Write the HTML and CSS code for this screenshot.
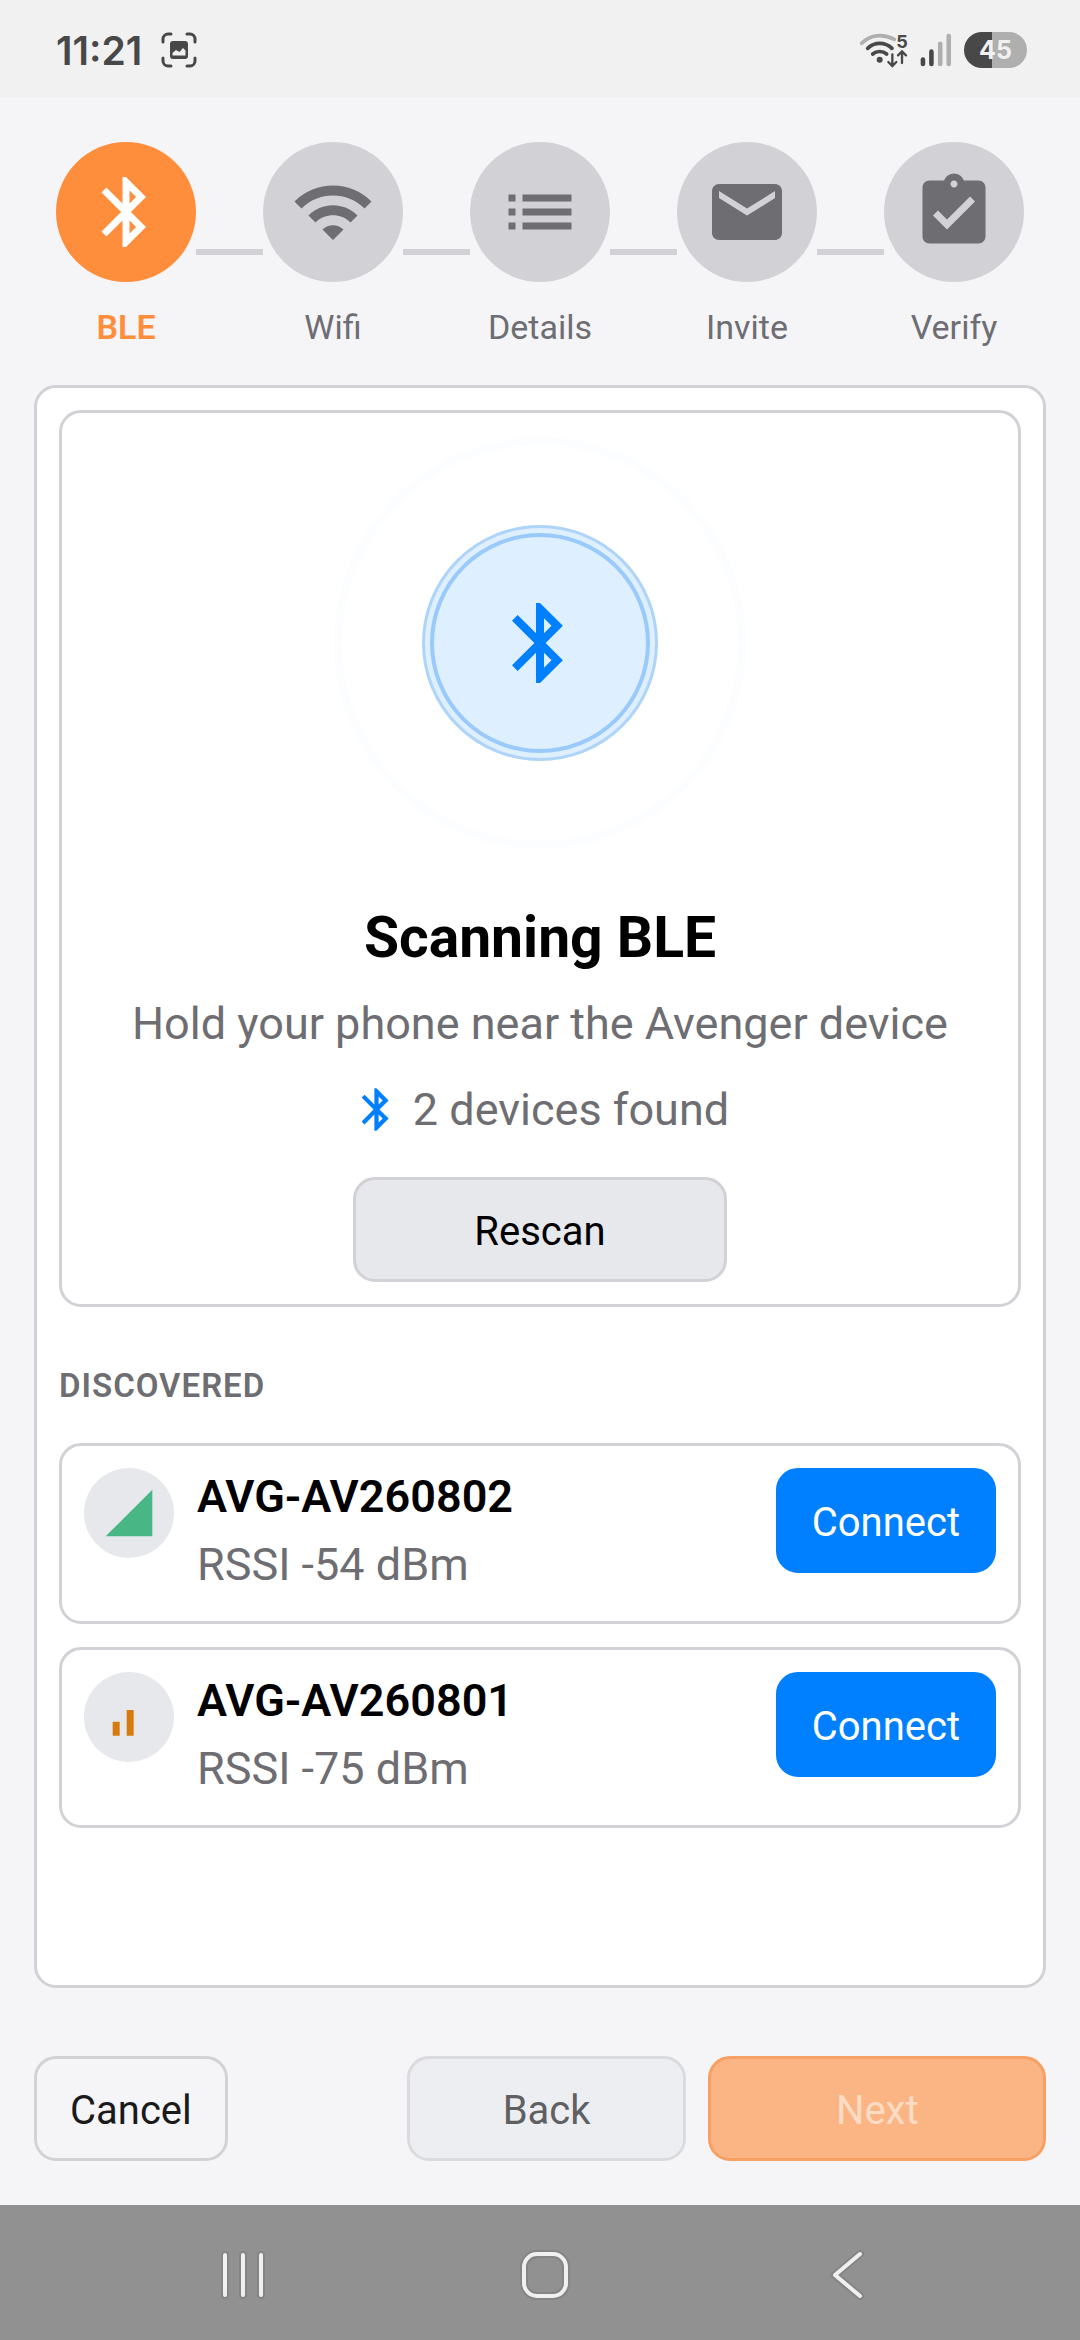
FILE: index.html
```html
<!DOCTYPE html>
<html lang="en">

<head>
    <meta charset="UTF-8">
    <meta name="viewport" content="width=device-width, initial-scale=1.0">
    <title>Device Setup</title>
    <link rel="stylesheet" href="styles.css">
</head>

<body>
    <!-- shared icon shapes -->
    <svg class="sprite" aria-hidden="true">
        <symbol id="bluetooth" viewBox="0 0 24 24">
            <path d="M17.71 7.71L12 2h-1v7.59L6.41 5 5 6.41 10.59 12 5 17.59 6.41 19 11 14.41V22h1l5.71-5.71-4.3-4.29 4.3-4.29zM13 5.83l1.88 1.88L13 9.59V5.83zm1.88 10.46L13 18.17v-3.76l1.88 1.88z" />
        </symbol>
    </svg>

    <div class="status-bar">
        <div class="status-left">
            <span class="clock">11:21</span>
            <svg class="capture-icon" viewBox="0 0 36 36">
                <path d="M2 10V7a5 5 0 0 1 5-5h3M26 2h3a5 5 0 0 1 5 5v3M34 26v3a5 5 0 0 1-5 5h-3M10 34H7a5 5 0 0 1-5-5v-3" fill="none" stroke="#484848" stroke-width="3" stroke-linecap="round" />
                <path fill-rule="evenodd" fill="#484848" d="M12 9h12a3 3 0 0 1 3 3v12a3 3 0 0 1-3 3H12a3 3 0 0 1-3-3V12a3 3 0 0 1 3-3zM11.500 21v2.500h13v-5l-2.500-2.500-3.500 4-3.500-2z" />
            </svg>
        </div>
        <div class="status-right">
            <svg class="wifi-status" viewBox="54 64 147 108">
                <path d="M62 98C86 73 124 67 160 86" fill="none" stroke="#afafaf" stroke-width="11" stroke-linecap="round" />
                <path d="M80 113C100 93 132 93 153 113M95 130C107 120 125 120 137 130" fill="none" stroke="#484848" stroke-width="11" stroke-linecap="round" />
                <circle cx="116" cy="147" r="9" fill="#484848" />
                <path d="M154 131v34M142 154l12 12 12-12M183 157v-34M171 134l12-12 12 12" fill="none" stroke="#484848" stroke-width="7" stroke-linecap="round" />
                <text x="166" y="111" class="wifi-band">5</text>
            </svg>
            <svg class="signal-status" viewBox="232 66 98 106">
                <g fill="#484848">
                    <rect x="234" y="141" width="14" height="28" rx="7" />
                    <rect x="260" y="117" width="14" height="52" rx="7" />
                </g>
                <g fill="#afafaf">
                    <rect x="287" y="93" width="14" height="76" rx="7" />
                    <rect x="313" y="69" width="14" height="100" rx="7" />
                </g>
            </svg>
            <span class="battery">45</span>
        </div>
    </div>

    <ol class="steps">
        <li class="step active">
            <div class="step-circle">
                <svg viewBox="0 0 24 24"><use href="#bluetooth" /></svg>
            </div>
            <span>BLE</span>
        </li>
        <li class="line"></li>
        <li class="step">
            <div class="step-circle">
                <svg viewBox="0 0 24 24">
                    <path d="M1 9l2 2c4.97-4.97 13.03-4.97 18 0l2-2C16.93 2.93 7.08 2.93 1 9zm8 8l3 3 3-3c-1.65-1.66-4.34-1.66-6 0zm-4-4l2 2c2.76-2.76 7.24-2.76 10 0l2-2C15.14 9.14 8.87 9.14 5 13z" />
                </svg>
            </div>
            <span>Wifi</span>
        </li>
        <li class="line"></li>
        <li class="step">
            <div class="step-circle">
                <svg viewBox="0 0 24 24">
                    <path d="M3 13h2v-2H3v2zm0 4h2v-2H3v2zm0-8h2V7H3v2zm4 4h14v-2H7v2zm0 4h14v-2H7v2zM7 7v2h14V7H7z" />
                </svg>
            </div>
            <span>Details</span>
        </li>
        <li class="line"></li>
        <li class="step">
            <div class="step-circle">
                <svg viewBox="0 0 24 24">
                    <path d="M20 4H4c-1.1 0-1.99.9-1.99 2L2 18c0 1.1.9 2 2 2h16c1.1 0 2-.9 2-2V6c0-1.1-.9-2-2-2zm0 4l-8 5-8-5V6l8 5 8-5v2z" />
                </svg>
            </div>
            <span>Invite</span>
        </li>
        <li class="line"></li>
        <li class="step">
            <div class="step-circle">
                <svg viewBox="0 0 24 24">
                    <path d="M19 3h-4.18C14.4 1.84 13.3 1 12 1c-1.3 0-2.4.84-2.82 2H5c-1.1 0-2 .9-2 2v14c0 1.1.9 2 2 2h14c1.1 0 2-.9 2-2V5c0-1.1-.9-2-2-2zm-7 0c.55 0 1 .45 1 1s-.45 1-1 1-1-.45-1-1 .45-1 1-1zm-2 14l-4-4 1.41-1.41L10 14.17l6.59-6.59L18 9l-8 8z" />
                </svg>
            </div>
            <span>Verify</span>
        </li>
    </ol>

    <main class="panel">
        <section class="scan-card">
            <div class="radar">
                <div class="ring ring-far"></div>
                <div class="ring ring-outer"></div>
                <div class="ring ring-inner">
                    <svg viewBox="0 0 24 24"><use href="#bluetooth" /></svg>
                </div>
            </div>
            <h1>Scanning BLE</h1>
            <p class="hint">Hold your phone near the Avenger device</p>
            <p class="found">
                <svg viewBox="0 0 24 24"><use href="#bluetooth" /></svg>
                <span>2 devices found</span>
            </p>
            <button type="button" class="btn rescan">Rescan</button>
        </section>

        <h2>DISCOVERED</h2>
        <ul class="devices">
            <li class="device">
                <div class="signal strong">
                    <svg viewBox="0 0 24 24"><path d="M2 22h20V2z" /></svg>
                </div>
                <div class="device-info">
                    <strong>AVG-AV260802</strong>
                    <span>RSSI -54 dBm</span>
                </div>
                <button type="button" class="btn connect">Connect</button>
            </li>
            <li class="device">
                <div class="signal weak">
                    <svg viewBox="0 0 24 24"><path d="M5 14h3v6H5zM11 9h3v11h-3z" /></svg>
                </div>
                <div class="device-info">
                    <strong>AVG-AV260801</strong>
                    <span>RSSI -75 dBm</span>
                </div>
                <button type="button" class="btn connect">Connect</button>
            </li>
        </ul>
    </main>

    <footer class="actions">
        <button type="button" class="btn cancel">Cancel</button>
        <button type="button" class="btn back" disabled>Back</button>
        <button type="button" class="btn next" disabled>Next</button>
    </footer>

    <nav class="nav-bar">
        <button type="button" aria-label="Recents">
            <svg viewBox="0 0 60 60">
                <path class="halo" d="M12 10v40M30 10v40M48 10v40" />
                <path d="M12 10v40M30 10v40M48 10v40" />
            </svg>
        </button>
        <button type="button" aria-label="Home">
            <svg viewBox="0 0 60 60">
                <rect class="halo" x="9" y="9" width="42" height="42" rx="13" />
                <rect x="9" y="9" width="42" height="42" rx="13" />
            </svg>
        </button>
        <button type="button" aria-label="Back">
            <svg viewBox="0 0 60 60">
                <path class="halo" d="M42 9L17 30l25 21" />
                <path d="M42 9L17 30l25 21" />
            </svg>
        </button>
    </nav>
</body>

</html>
```

FILE: styles.css
```css
* {
    box-sizing: border-box;
    margin: 0;
    padding: 0;
}

body {
    min-height: 100vh;
    display: flex;
    flex-direction: column;
    background-color: #f5f5f8;
    color: #000;
    font-family: Roboto, sans-serif;
}

ol,
ul {
    list-style: none;
}

.sprite {
    display: none;
}

/* status bar */
.status-bar {
    height: 98px;
    padding: 2px 53px 0 56px;
    display: flex;
    align-items: center;
    justify-content: space-between;
    background-color: #f1f1f1;
    color: #484848;
    font-family: Inter, sans-serif;
}

.status-left,
.status-right {
    display: flex;
    align-items: center;
}

.status-left {
    gap: 19px;
}

.status-right {
    gap: 12px;
}

.clock {
    font-size: 39px;
    font-weight: 600;
}

.capture-icon {
    width: 36px;
    height: 36px;
}

.wifi-status {
    width: 49px;
    height: 36px;
    overflow: visible;
}

.wifi-band {
    font-size: 54px;
    font-weight: 700;
    fill: #484848;
}

.signal-status {
    width: 32px;
    height: 36px;
}

.battery {
    width: 63px;
    height: 36px;
    border-radius: 18px;
    background: linear-gradient(to right, #484848 45%, #afafaf 45%);
    color: #f1f1f1;
    font-size: 25px;
    font-weight: 700;
    line-height: 36px;
    text-align: center;
}

/* stepper */
.steps {
    display: flex;
    padding: 44px 56px 38px;
}

.step {
    width: 140px;
    display: flex;
    flex-direction: column;
    align-items: center;
    gap: 25px;
    color: #6d6d72;
    font-size: 34px;
    line-height: 40px;
}

.step-circle {
    width: 140px;
    height: 140px;
    border-radius: 50%;
    background-color: #d2d1d6;
    display: flex;
    align-items: center;
    justify-content: center;
}

.step-circle svg {
    width: 84px;
    height: 84px;
    fill: #6d6d72;
}

.step.active {
    color: #ff8e3c;
    font-weight: 600;
}

.active .step-circle {
    background-color: #ff8e3c;
}

.active .step-circle svg {
    fill: #fff;
}

.line {
    flex: 1;
    height: 6px;
    margin-top: 107px;
    background-color: #d2d1d6;
}

/* main panel */
.panel {
    flex: 1;
    margin: 0 34px;
    padding: 22px;
    background-color: #fff;
    border: 3px solid #d2d1d6;
    border-radius: 22px;
}

.scan-card {
    padding: 22px;
    display: flex;
    flex-direction: column;
    align-items: center;
    border: 3px solid #d2d1d6;
    border-radius: 22px;
    text-align: center;
}

.radar {
    display: grid;
    place-items: center;
    height: 416px;
    margin-bottom: 54px;
}

.ring {
    grid-area: 1 / 1;
    border-radius: 50%;
}

.ring-far {
    width: 412px;
    height: 412px;
    border: 8px solid #fcfdff;
}

.ring-outer {
    width: 236px;
    height: 236px;
    background-color: #deefff;
    border: 3px solid #aed4f9;
}

.ring-inner {
    width: 220px;
    height: 220px;
    display: flex;
    align-items: center;
    justify-content: center;
    background-color: #deefff;
    border: 4px solid #99cafb;
}

.ring-inner svg {
    width: 96px;
    height: 96px;
    fill: #007fff;
}

h1 {
    margin-bottom: 26px;
    font-size: 57px;
    font-weight: 700;
    line-height: 66px;
}

.hint,
.found {
    color: #6d6d72;
    font-size: 45px;
    line-height: 53px;
}

.hint {
    margin-bottom: 33px;
}

.found {
    display: flex;
    align-items: center;
    gap: 11px;
    margin-bottom: 41px;
}

.found svg {
    width: 51px;
    height: 51px;
    fill: #007fff;
}

.btn {
    height: 105px;
    padding: 4px 33px 0;
    border: 3px solid #d2d1d6;
    border-radius: 22px;
    background-color: transparent;
    color: #000;
    font-family: inherit;
    font-size: 40px;
}

.rescan {
    width: 41%;
    background-color: #e7e8ec;
}

h2 {
    margin: 59px 0 37px;
    color: #6d6d72;
    font-size: 33px;
    font-weight: 600;
    letter-spacing: 1px;
    line-height: 40px;
}

.devices {
    display: flex;
    flex-direction: column;
    gap: 23px;
}

.device {
    display: flex;
    align-items: flex-start;
    gap: 23px;
    padding: 22px;
    border: 3px solid #d2d1d6;
    border-radius: 22px;
}

.signal {
    width: 90px;
    height: 90px;
    border-radius: 50%;
    background-color: #e7e8ec;
    display: flex;
    align-items: center;
    justify-content: center;
}

.signal svg {
    width: 56px;
    height: 56px;
}

.strong {
    fill: #49b685;
}

.weak {
    fill: #d67c0e;
}

.device-info {
    flex: 1;
    display: flex;
    flex-direction: column;
    gap: 15px;
    padding: 2px 0 8px;
    font-size: 45px;
    line-height: 53px;
}

.device-info strong {
    font-weight: 600;
}

.device-info span {
    color: #6d6d72;
}

.connect {
    background-color: #007fff;
    border-color: #007fff;
    color: #fff;
}

/* bottom buttons */
.actions {
    display: grid;
    grid-template-columns: auto 14fr 29fr 35fr;
    gap: 22px;
    padding: 68px 34px 44px;
}

.cancel {
    color: #1a1a1b;
}

.back {
    grid-column: 3;
    background-color: #edeef2;
    border-color: #dbdbdf;
    color: #5f6062;
}

.next {
    background-color: #fbb584;
    border-color: #f7a064;
    color: #fddcc5;
}

/* system navigation */
.nav-bar {
    display: grid;
    grid-template-columns: repeat(3, 1fr);
    height: 135px;
    padding: 4px 81px 0 92px;
    background-color: #919191;
}

.nav-bar button {
    display: flex;
    align-items: center;
    justify-content: center;
    background: none;
    border: none;
}

.nav-bar svg {
    width: 60px;
    height: 60px;
    fill: none;
    stroke: #f0f0f0;
    stroke-width: 4px;
    stroke-linecap: round;
    stroke-linejoin: round;
}

.nav-bar .halo {
    stroke: #858585;
    stroke-width: 8px;
}
```
